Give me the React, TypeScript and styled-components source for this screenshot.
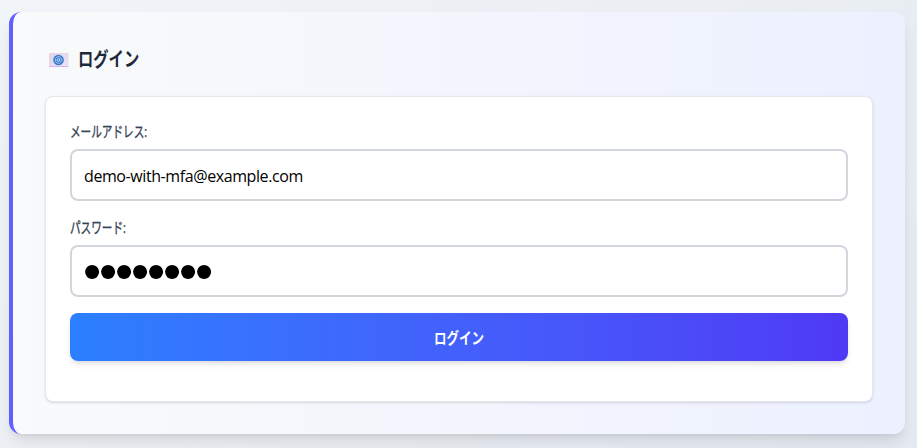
import React from "react";
import styled, { createGlobalStyle } from "styled-components";

const GlobalStyle = createGlobalStyle`
  *, *::before, *::after { box-sizing: border-box; }
  body {
    margin: 0;
    overflow: hidden;
    font-family: "Open Sans", "Noto Sans CJK JP", sans-serif;
    font-size: 16px;
  }
`;

const Page = styled.main`
  height: 448px;
  padding: 12px 12px 14px 9px;
  overflow: hidden;
  background: linear-gradient(135deg, #f1f5f9 0%, #ebeff3 50%, #e4e9f2 100%);
`;

const Card = styled.section`
  height: 422px;
  padding: 32px;
  border-left: 4px solid #615fff;
  border-radius: 12px;
  background: linear-gradient(to right in oklab, #f9fafb, #edf1ff);
  box-shadow: 0 10px 15px -3px rgba(0, 0, 0, 0.1), 0 4px 6px -4px rgba(0, 0, 0, 0.1);
`;

const Heading = styled.h2`
  display: flex;
  align-items: center;
  height: 32px;
  margin: 0 0 20px;
  padding-left: 4px;
  color: #1e2939;
  font-size: 20px;
  font-weight: 700;
  line-height: 32px;
`;

const MailIcon = styled.svg`
  width: 20px;
  height: 16px;
  margin-right: 9px;
`;

const Kana = styled.span<{ $scale: number }>`
  display: inline-block;
  white-space: nowrap;
  transform: scaleX(${(p) => p.$scale});
  transform-origin: left center;
`;

const Form = styled.form`
  height: 306px;
  padding: 24px;
  border: 1px solid #e5e7eb;
  border-radius: 8px;
  background: #fff;
  box-shadow: 0 1px 3px rgba(0, 0, 0, 0.1), 0 1px 2px -1px rgba(0, 0, 0, 0.1);
`;

const Field = styled.div`
  display: flex;
  flex-direction: column;
  gap: 8px;
  margin-bottom: 16px;
`;

const Label = styled.label`
  height: 20px;
  color: #364153;
  font-size: 15px;
  line-height: 20px;
  -webkit-text-stroke: 0.35px #364153;
`;

const Input = styled.input`
  width: 100%;
  height: 52px;
  padding: 2px 12px 0;
  border: 2px solid #d1d5dc;
  border-radius: 8px;
  outline: none;
  background: #fff;
  color: #000;
  font: 16px "Open Sans", sans-serif;
  letter-spacing: -0.41px;
`;

const PasswordInput = styled(Input)`
  padding: 0 11px 1px;
  font-family: "Liberation Sans", sans-serif;
  font-size: 52px;
  line-height: 46px;
  letter-spacing: -2.2px;
`;

const Submit = styled.button`
  display: flex;
  align-items: center;
  justify-content: center;
  width: 100%;
  height: 48px;
  padding: 0 0 1px;
  border: 0;
  border-radius: 8px;
  background: linear-gradient(to right in oklab, #2b7fff, #4f39f6);
  box-shadow: 0 4px 6px -1px rgba(0, 0, 0, 0.1), 0 2px 4px -2px rgba(0, 0, 0, 0.1);
  color: #fff;
  font: 600 16px "Noto Sans CJK JP", sans-serif;
`;

const ButtonText = styled.span`
  transform: scaleX(0.78);
`;

function EmailIcon() {
  return (
    <MailIcon viewBox="0 0 20 16" aria-hidden="true">
      <defs>
        <linearGradient id="envelope" x1="0" y1="0" x2="1" y2="1">
          <stop offset="0" stopColor="#e1d2df" />
          <stop offset="1" stopColor="#f0e2fa" />
        </linearGradient>
      </defs>
      <rect x="0" y="1" width="19.5" height="14" fill="url(#envelope)" />
      <path d="M0 1 8 8h3l8.5-7M0 15l7-6m12.5 6L13 9" fill="none" stroke="#eadff0" strokeWidth=".8" />
      <path d="M0 14.5h19.5" stroke="#d6b5eb" />
      <circle cx="9.5" cy="8" r="5.3" fill="#367bd0" />
      <circle cx="9.3" cy="8" r="1.3" fill="none" stroke="#d5dcf6" strokeWidth=".9" />
      <path d="M10.7 6.5v2.3c0 1.3 2.1 1 2.1-.8a3.3 3.3 0 1 0-1.6 2.8" fill="none" stroke="#b9cff2" strokeWidth=".9" />
    </MailIcon>
  );
}

export default function App() {
  return (
    <>
      <GlobalStyle />
      <Page>
        <Card>
          <Heading>
            <EmailIcon />
            <Kana $scale={0.765}>ログイン</Kana>
          </Heading>
          <Form onSubmit={(e) => e.preventDefault()}>
            <Field>
              <Label htmlFor="email"><Kana $scale={0.708}>メールアドレス:</Kana></Label>
              <Input id="email" type="email" defaultValue="demo-with-mfa@example.com" />
            </Field>
            <Field>
              <Label htmlFor="password"><Kana $scale={0.708}>パスワード:</Kana></Label>
              <PasswordInput id="password" type="password" defaultValue="password" />
            </Field>
            <Submit type="submit"><ButtonText>ログイン</ButtonText></Submit>
          </Form>
        </Card>
      </Page>
    </>
  );
}
